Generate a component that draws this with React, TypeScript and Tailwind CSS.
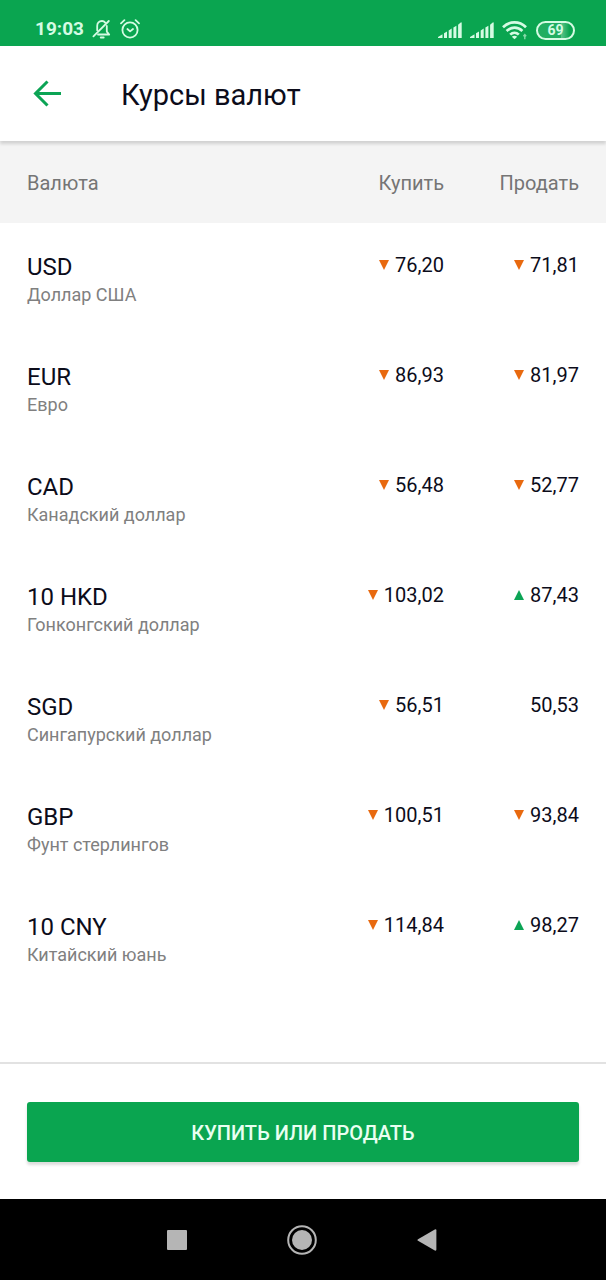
type Trend = "up" | "down" | "none";

interface Quote {
  value: string;
  trend: Trend;
}

interface Rate {
  code: string;
  name: string;
  buy: Quote;
  sell: Quote;
}

const rates: Rate[] = [
  { code: "USD", name: "Доллар США", buy: { value: "76,20", trend: "down" }, sell: { value: "71,81", trend: "down" } },
  { code: "EUR", name: "Евро", buy: { value: "86,93", trend: "down" }, sell: { value: "81,97", trend: "down" } },
  { code: "CAD", name: "Канадский доллар", buy: { value: "56,48", trend: "down" }, sell: { value: "52,77", trend: "down" } },
  { code: "10 HKD", name: "Гонконгский доллар", buy: { value: "103,02", trend: "down" }, sell: { value: "87,43", trend: "up" } },
  { code: "SGD", name: "Сингапурский доллар", buy: { value: "56,51", trend: "down" }, sell: { value: "50,53", trend: "none" } },
  { code: "GBP", name: "Фунт стерлингов", buy: { value: "100,51", trend: "down" }, sell: { value: "93,84", trend: "down" } },
  { code: "10 CNY", name: "Китайский юань", buy: { value: "114,84", trend: "down" }, sell: { value: "98,27", trend: "up" } },
];

function BellOffIcon() {
  return (
    <svg width="20" height="20" viewBox="0 0 20 20" fill="none" stroke="currentColor" strokeWidth="1.8" strokeLinecap="round" strokeLinejoin="round" aria-hidden="true">
      <path d="M13.2 3.6C12.4 2.6 11.4 2 10 2 7 2 5.2 4.2 5.2 7v4.2" />
      <path d="M14.8 7v5.6l2.4 2.9H6" />
      <path d="M1.4 17.4 16.8 2" />
      <path d="M8.8 18.4h2.8" strokeWidth="2" />
    </svg>
  );
}

function AlarmIcon() {
  return (
    <svg width="20" height="20" viewBox="0 0 20 20" fill="none" stroke="currentColor" strokeWidth="1.8" strokeLinecap="round" strokeLinejoin="round" aria-hidden="true">
      <circle cx="10" cy="11" r="7.6" />
      <path d="m7.4 10 2.7 2.4L13 10" />
      <path d="M1 4.4 4.4 1.2M19 4.4l-3.400-3.200" />
    </svg>
  );
}

function SignalIcon() {
  return (
    <svg width="24" height="18" viewBox="0 0 24 18" fill="currentColor" aria-hidden="true">
      <path d="M0 17v-1L4.500 13.200V17zM6 17v-4.800L9 10.400V17zM10.700 17V9.400l3-1.800V17zM15.400 17V6.600l3-1.800V17zM20.100 17V3.800l2.600-2.400q1-.6 1 .6v15z" />
    </svg>
  );
}

function WifiIcon() {
  return (
    <svg width="26" height="20" viewBox="0 0 26 20" fill="none" stroke="currentColor" strokeWidth="2.7" aria-hidden="true">
      <path d="M1 7.2C7.6.8 17.4.8 24 7.2" />
      <path d="M4.6 11c4.600-4.400 11.200-4.400 15.800 0" />
      <path d="M8.2 14.6c2.500-2.400 6.100-2.400 8.600 0" />
      <path d="M9.8 16.8c1.800-1.400 3.600-1.400 5.400 0l-2.700 2.400z" fill="currentColor" stroke="none" />
      <path d="M22.800 14.600v4.600M21.400 16.200l1.400-1.600 1.400 1.600" strokeWidth="1.4" opacity=".6" />
    </svg>
  );
}

function StatusBar() {
  return (
    <div className="flex h-[46px] items-end justify-between bg-[#0aa550] pr-[31px] pb-[6px] pl-[35px] text-[#d5fbe3]">
      <div className="flex items-center gap-2">
        <span className="text-[19px] leading-[22px] font-bold">19:03</span>
        <BellOffIcon />
        <AlarmIcon />
      </div>
      <div className="flex items-center gap-2">
        <SignalIcon />
        <SignalIcon />
        <WifiIcon />
        <span className="flex h-[19px] w-[39px] items-center justify-center rounded-full border-2 border-current bg-linear-to-r from-white/10 from-65% via-white/35 via-65% to-transparent to-90% text-sm leading-none font-bold">
          69
        </span>
      </div>
    </div>
  );
}

function TrendMark({ trend }: { trend: Trend }) {
  if (trend === "none") return null;
  return trend === "up" ? (
    <svg width="10" height="10" viewBox="0 0 10 10" className="text-[#0ca455]" fill="currentColor" role="img" aria-label="рост">
      <path d="M5 0l5 10H0z" />
    </svg>
  ) : (
    <svg width="10" height="10" viewBox="0 0 10 10" className="text-[#e8690f]" fill="currentColor" role="img" aria-label="снижение">
      <path d="M0 0h10L5 10z" />
    </svg>
  );
}

function QuoteCell({ quote }: { quote: Quote }) {
  return (
    <div className="flex items-center justify-end gap-1.5 text-xl leading-6">
      <TrendMark trend={quote.trend} />
      <span>{quote.value}</span>
    </div>
  );
}

export default function App() {
  return (
    <div className="flex min-h-screen flex-col bg-white font-[Roboto,sans-serif] text-[#0c0c1a]">
      <StatusBar />
      <header className="relative flex h-[95px] items-center bg-white px-[33px] shadow-[0_3px_3px_rgba(0,0,0,0.14)]">
        <a href="#back" aria-label="Назад" className="text-[#0ca455]">
          <svg width="28" height="28" viewBox="0 0 28 28" fill="none" stroke="currentColor" strokeWidth="3" aria-hidden="true">
            <path d="M14.5 1.5 2.5 13.5l12 12M2.5 13.5H28" />
          </svg>
        </a>
        <h1 className="ml-[60px] pt-0.5 text-[29px] leading-9">Курсы валют</h1>
      </header>

      <main className="grow">
        <table className="w-full table-fixed border-collapse">
          <thead className="bg-[#f4f4f4] text-xl text-[#757575]">
            <tr className="h-[82px]">
              <th scope="col" className="pt-0.5 pl-[27px] text-left font-normal">Валюта</th>
              <th scope="col" className="w-[150px] pt-0.5 text-right font-normal">Купить</th>
              <th scope="col" className="w-[162px] pt-0.5 pr-[27px] text-right font-normal">Продать</th>
            </tr>
          </thead>
          <tbody>
            {rates.map((rate) => (
              <tr key={rate.code} className="h-[110px] align-top">
                <th scope="row" className="pt-[30px] pl-[27px] text-left font-normal">
                  <div className="text-2xl leading-7">{rate.code}</div>
                  <div className="text-lg leading-7 text-[#808080]">{rate.name}</div>
                </th>
                <td className="pt-[30px]">
                  <QuoteCell quote={rate.buy} />
                </td>
                <td className="pt-[30px] pr-[27px]">
                  <QuoteCell quote={rate.sell} />
                </td>
              </tr>
            ))}
          </tbody>
        </table>
      </main>

      <footer className="border-t-2 border-[#e2e2e2] px-[27px] pt-[38px] pb-[37px]">
        <button
          type="button"
          className="block h-[60px] w-full rounded-[3px] bg-[#0aa550] pt-0.5 text-xl font-medium text-[#e9fff1] shadow-[0_3px_3px_rgba(0,0,0,0.14)]"
        >
          КУПИТЬ ИЛИ ПРОДАТЬ
        </button>
      </footer>

      <nav aria-label="Системная навигация" className="flex h-[81px] items-center justify-center gap-[81px] bg-black pr-0.5 text-[#b5b5b5]">
        <button type="button" aria-label="Недавние" className="flex w-11 justify-center">
          <svg width="20" height="20" viewBox="0 0 20 20" fill="currentColor" aria-hidden="true">
            <rect width="20" height="20" rx="1" />
          </svg>
        </button>
        <button type="button" aria-label="Домой" className="flex w-11 justify-center">
          <svg width="30" height="30" viewBox="0 0 30 30" fill="currentColor" aria-hidden="true">
            <circle cx="15" cy="15" r="13.8" fill="none" stroke="currentColor" strokeWidth="2" />
            <circle cx="15" cy="15" r="10" />
          </svg>
        </button>
        <button type="button" aria-label="Назад" className="flex w-11 justify-center">
          <svg width="20" height="22" viewBox="0 0 20 22" fill="currentColor" aria-hidden="true">
            <path d="M1 10.2 17.8.4Q19.4-.2 19.4 1.4v19.2q0 1.600-1.600 1L1 11.800q-1.200-.8 0-1.600z" />
          </svg>
        </button>
      </nav>
    </div>
  );
}
